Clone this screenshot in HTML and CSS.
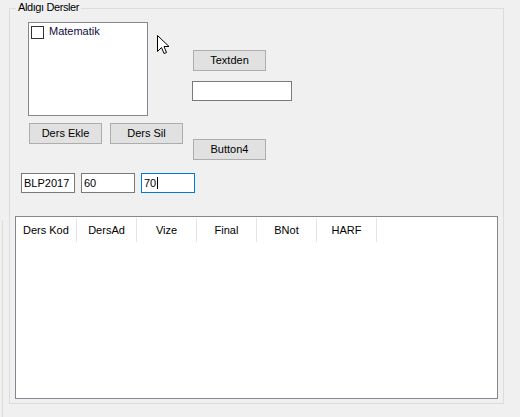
FILE: index.html
```html
<!DOCTYPE html>
<html>
<head>
<meta charset="utf-8">
<link rel="stylesheet" href="styles.css">
</head>
<body>
<div class="group">
  <div class="legend">Aldıgı Dersler</div>
  <div class="top">
    <div class="left-col">
      <div class="listbox">
        <div class="item"><span class="check"></span><span class="item-text">Matematik</span></div>
      </div>
      <div class="btn-row">
        <div class="btn">Ders Ekle</div>
        <div class="btn">Ders Sil</div>
      </div>
    </div>
    <div class="right-col">
      <div class="btn btn-textden">Textden</div>
      <div class="textbox tb-wide"></div>
      <div class="btn btn-b4">Button4</div>
    </div>
  </div>
  <div class="inputs">
    <div class="textbox tb-small">BLP2017</div>
    <div class="textbox tb-small">60</div>
    <div class="textbox tb-small focus">70<span class="caret"></span></div>
  </div>
  <div class="listview">
    <div class="header">
      <div class="col col-first">Ders Kod</div>
      <div class="col">DersAd</div>
      <div class="col">Vize</div>
      <div class="col">Final</div>
      <div class="col">BNot</div>
      <div class="col">HARF</div>
    </div>
  </div>
</div>
<svg class="cursor" width="13" height="20" viewBox="0 0 13 20">
  <path d="M0.5 0.5 L0.5 16.5 L4.5 12.5 L7 18.5 L9.5 17.5 L7 11.5 L12 11.5 Z" fill="#fff" stroke="#000" stroke-width="1" stroke-linejoin="miter"/>
</svg>
</body>
</html>
```
FILE: styles.css
```css
html, body {
  margin: 0;
  padding: 0;
}
body {
  width: 520px;
  height: 417px;
  overflow: hidden;
  background: #f0f0f0;
  font-family: "Liberation Sans", Arial, sans-serif;
  font-size: 11px;
  color: #000;
  position: relative;
  padding-top: 8px;
  box-sizing: border-box;
}
body::before {
  content: "";
  position: absolute;
  left: 2px;
  top: 220px;
  width: 1px;
  height: 200px;
  background: #dcdcdc;
}
.group {
  margin-left: 9px;
  width: 495px;
  height: 396px;
  box-sizing: border-box;
  border: 1px solid #dcdcdc;
}
.legend {
  display: block;
  width: max-content;
  margin-top: -8px;
  margin-left: 6px;
  padding: 0 2px;
  height: 13px;
  line-height: 13px;
  background: #f0f0f0;
  letter-spacing: -0.4px;
}
.top {
  display: flex;
  height: 146px;
}
.left-col {
  width: 182px;
  display: flex;
  flex-direction: column;
}
.listbox {
  margin-left: 18px;
  margin-top: 8px;
  width: 120px;
  height: 94px;
  box-sizing: border-box;
  border: 1px solid #828790;
  background: #fff;
}
.item {
  display: flex;
  align-items: flex-start;
  height: 16px;
  line-height: 16px;
}
.check {
  width: 13px;
  height: 13px;
  box-sizing: border-box;
  border: 1px solid #333;
  background: #fff;
  margin-left: 2px;
  margin-top: 3px;
}
.item-text {
  margin-left: 5px;
  color: #0b0b3b;
}
.btn-row {
  display: flex;
  gap: 8px;
  margin-left: 19px;
  margin-top: 7px;
}
.btn {
  width: 73px;
  height: 21px;
  box-sizing: border-box;
  border: 1px solid #adadad;
  background: #e1e1e1;
  text-align: center;
  line-height: 19px;
}
.right-col {
  display: flex;
  flex-direction: column;
}
.btn-textden {
  margin-top: 36px;
  margin-left: 1px;
}
.btn-b4 {
  margin-top: 38px;
  margin-left: 1px;
}
.textbox {
  height: 20px;
  box-sizing: border-box;
  border: 1px solid #7a7a7a;
  background: #fff;
  line-height: 18px;
  padding-left: 2px;
  display: flex;
  align-items: center;
}
.tb-wide {
  width: 100px;
  margin-top: 10px;
}
.inputs {
  display: flex;
  gap: 6px;
  margin-left: 11px;
  margin-top: 13px;
}
.tb-small {
  width: 54px;
}
.focus {
  border-color: #0078d7;
}
.caret {
  display: inline-block;
  width: 1px;
  height: 12px;
  background: #000;
  margin-left: 1px;
}
.listview {
  margin-left: 5px;
  margin-top: 23px;
  width: 483px;
  height: 183px;
  box-sizing: border-box;
  border: 1px solid #828790;
  background: #fff;
}
.header {
  display: flex;
  padding-left: 1px;
}
.col {
  width: 60px;
  height: 24px;
  margin-top: 1px;
  box-sizing: border-box;
  border-right: 1px solid #e5e5e5;
  line-height: 24px;
  text-align: center;
}
.col-first {
  text-align: left;
  padding-left: 6px;
}
.cursor {
  position: absolute;
  left: 157px;
  top: 35px;
}
```
